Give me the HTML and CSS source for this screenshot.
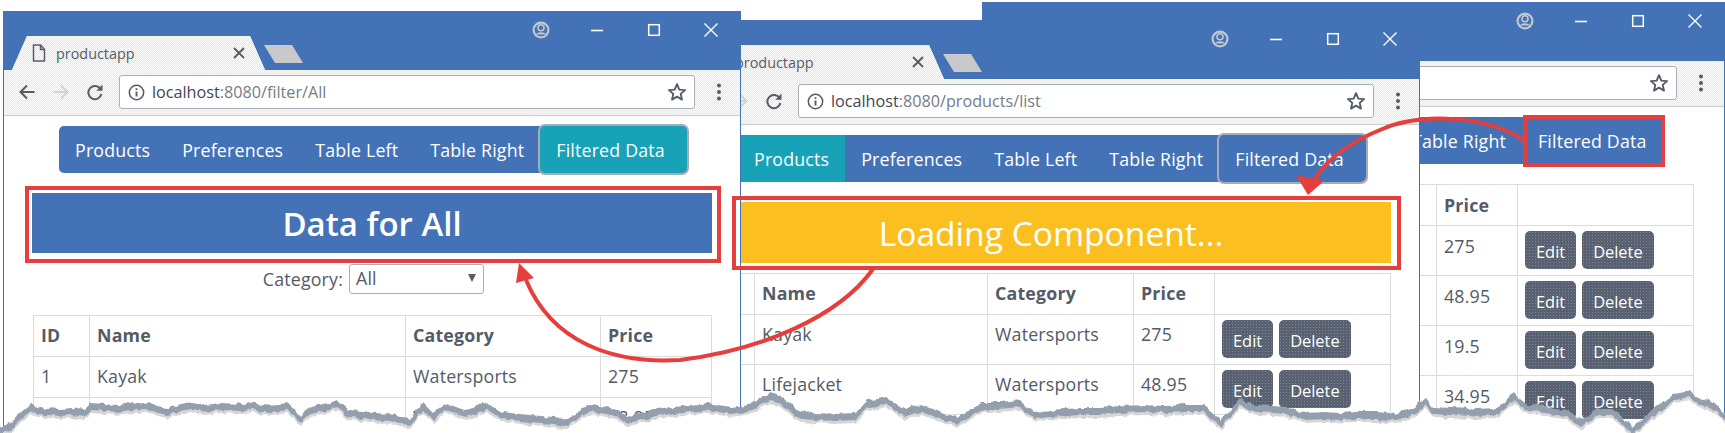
FILE: index.html
```html
<!DOCTYPE html>
<html lang="en">
<head>
<meta charset="utf-8">
<title>productapp</title>
<link rel="stylesheet" href="styles.css">
</head>
<body>
<svg class="defs" width="0" height="0" aria-hidden="true">
  <symbol id="i-doc" viewBox="0 0 14 18"><path d="M1.5 1h7l4 4.5V17h-11zM8.5 1v4.5h4" fill="none" stroke="#555c68" stroke-width="1.5" stroke-linejoin="round"/></symbol>
  <symbol id="i-x" viewBox="0 0 14 14"><path d="M2 2l10 10M12 2L2 12" fill="none" stroke="currentColor" stroke-width="1.8"/></symbol>
  <symbol id="i-xthin" viewBox="0 0 16 16"><path d="M1.5 1.5l13 13M14.5 1.5l-13 13" fill="none" stroke="currentColor" stroke-width="1.4"/></symbol>
  <symbol id="i-min" viewBox="0 0 16 16"><path d="M2 8.5h12" fill="none" stroke="currentColor" stroke-width="1.6"/></symbol>
  <symbol id="i-max" viewBox="0 0 16 16"><rect x="2.7" y="2.7" width="10.6" height="10.6" fill="none" stroke="currentColor" stroke-width="1.5"/></symbol>
  <symbol id="i-user" viewBox="0 0 18 18"><circle cx="9" cy="9" r="7.4" fill="#4472b6" stroke="#c3c7ce" stroke-width="2.2"/><circle cx="9" cy="6.8" r="3" fill="none" stroke="#c3c7ce" stroke-width="1.6"/><path d="M4 13.6c1-3 9-3 10 0" fill="#c3c7ce"/></symbol>
  <symbol id="i-back" viewBox="0 0 18 18"><path d="M16.5 9H3M9 2.5L2.5 9 9 15.5" fill="none" stroke="currentColor" stroke-width="2"/></symbol>
  <symbol id="i-fwd" viewBox="0 0 18 18"><path d="M1.5 9H15M9 2.5L15.5 9 9 15.5" fill="none" stroke="currentColor" stroke-width="2"/></symbol>
  <symbol id="i-reload" viewBox="0 0 18 18"><path d="M14.6 6.2A6.6 6.6 0 1 0 15.4 11" fill="none" stroke="currentColor" stroke-width="2"/><path d="M16.5 1.6v6.2h-6.2z" fill="currentColor"/></symbol>
  <symbol id="i-info" viewBox="0 0 18 18"><circle cx="9" cy="9" r="7.6" fill="none" stroke="currentColor" stroke-width="1.6"/><path d="M9 8v5.2M9 4.6v1.8" fill="none" stroke="currentColor" stroke-width="2"/></symbol>
  <symbol id="i-star" viewBox="0 0 20 20"><path d="M10 2.2l2.3 5.4 5.8.5-4.4 3.8 1.3 5.7-5-3-5 3 1.3-5.7-4.4-3.8 5.8-.5z" fill="none" stroke="currentColor" stroke-width="1.9" stroke-linejoin="round"/></symbol>
  <symbol id="i-menu" viewBox="0 0 6 20"><circle cx="3" cy="3.5" r="2" fill="currentColor"/><circle cx="3" cy="10" r="2" fill="currentColor"/><circle cx="3" cy="16.5" r="2" fill="currentColor"/></symbol>
  <filter id="rough" x="-1%" y="-5%" width="102%" height="110%"><feTurbulence type="fractalNoise" baseFrequency="0.14 0.06" numOctaves="2" seed="4"/><feDisplacementMap in="SourceGraphic" scale="6" xChannelSelector="R" yChannelSelector="G"/></filter>
</svg>

<div class="desk">

  <section class="win win-3">
    <header class="titlebar">
      <div class="controls"><svg class="ctl ctl-user"><use href="#i-user"/></svg><svg class="ctl"><use href="#i-min"/></svg><svg class="ctl"><use href="#i-max"/></svg><svg class="ctl"><use href="#i-xthin"/></svg></div>
    </header>
    <div class="toolbar toolbar-end">
      <div class="addr"><svg class="addr-star"><use href="#i-star"/></svg></div>
      <svg class="tb-menu"><use href="#i-menu"/></svg>
    </div>
    <div class="content">
      <nav class="nav"><span class="nav-gap"></span><a>Table Right</a><a>Filtered Data</a></nav>
      <table class="grid grid-act grid-top">
        <colgroup><col class="c-id2"><col class="c-name2"><col class="c-cat2"><col class="c-price2"><col class="c-act"></colgroup>
        <tr><th></th><th></th><th></th><th>Price</th><th></th></tr>
        <tr><td></td><td></td><td></td><td>275</td><td><button class="btn">Edit</button><button class="btn">Delete</button></td></tr>
        <tr><td></td><td></td><td></td><td>48.95</td><td><button class="btn">Edit</button><button class="btn">Delete</button></td></tr>
        <tr><td></td><td></td><td></td><td>19.5</td><td><button class="btn">Edit</button><button class="btn">Delete</button></td></tr>
        <tr><td></td><td></td><td></td><td>34.95</td><td><button class="btn">Edit</button><button class="btn">Delete</button></td></tr>
      </table>
    </div>
  </section>

  <section class="win win-2">
    <header class="titlebar">
      <div class="tab"><svg class="tab-doc"><use href="#i-doc"/></svg><span class="tab-name">productapp</span><svg class="tab-x"><use href="#i-x"/></svg></div>
      <div class="ghost"></div>
      <div class="controls"><svg class="ctl ctl-user"><use href="#i-user"/></svg><svg class="ctl"><use href="#i-min"/></svg><svg class="ctl"><use href="#i-max"/></svg><svg class="ctl"><use href="#i-xthin"/></svg></div>
    </header>
    <div class="toolbar">
      <svg class="tb tb-back"><use href="#i-back"/></svg><svg class="tb tb-fwd"><use href="#i-fwd"/></svg><svg class="tb"><use href="#i-reload"/></svg>
      <div class="addr"><svg class="addr-info"><use href="#i-info"/></svg><span class="url"><b>localhost</b>:8080/products/list</span><svg class="addr-star"><use href="#i-star"/></svg></div>
      <svg class="tb-menu"><use href="#i-menu"/></svg>
    </div>
    <div class="content">
      <nav class="nav"><a class="on">Products</a><a>Preferences</a><a>Table Left</a><a>Table Right</a><a class="focus">Filtered Data</a></nav>
      <h3 class="banner banner-wait">Loading Component...</h3>
      <table class="grid grid-act grid-mid">
        <colgroup><col class="c-id2"><col class="c-name2"><col class="c-cat2"><col class="c-price2"><col class="c-act"></colgroup>
        <tr><th></th><th>Name</th><th>Category</th><th>Price</th><th></th></tr>
        <tr><td></td><td>Kayak</td><td>Watersports</td><td>275</td><td><button class="btn">Edit</button><button class="btn">Delete</button></td></tr>
        <tr><td></td><td>Lifejacket</td><td>Watersports</td><td>48.95</td><td><button class="btn">Edit</button><button class="btn">Delete</button></td></tr>
      </table>
    </div>
  </section>

  <section class="win win-1">
    <header class="titlebar">
      <div class="tab"><svg class="tab-doc"><use href="#i-doc"/></svg><span class="tab-name">productapp</span><svg class="tab-x"><use href="#i-x"/></svg></div>
      <div class="ghost"></div>
      <div class="controls"><svg class="ctl ctl-user"><use href="#i-user"/></svg><svg class="ctl"><use href="#i-min"/></svg><svg class="ctl"><use href="#i-max"/></svg><svg class="ctl"><use href="#i-xthin"/></svg></div>
    </header>
    <div class="toolbar">
      <svg class="tb tb-back"><use href="#i-back"/></svg><svg class="tb tb-fwd"><use href="#i-fwd"/></svg><svg class="tb"><use href="#i-reload"/></svg>
      <div class="addr"><svg class="addr-info"><use href="#i-info"/></svg><span class="url"><b>localhost</b>:8080/filter/All</span><svg class="addr-star"><use href="#i-star"/></svg></div>
      <svg class="tb-menu"><use href="#i-menu"/></svg>
    </div>
    <div class="content">
      <nav class="nav"><a>Products</a><a>Preferences</a><a>Table Left</a><a>Table Right</a><a class="on focus">Filtered Data</a></nav>
      <h3 class="banner banner-data">Data for All</h3>
      <div class="filter"><span>Category:</span><div class="select"><span>All</span><i class="caret"></i></div></div>
      <table class="grid grid-plain">
        <colgroup><col class="c-id1"><col class="c-name1"><col class="c-cat1"><col class="c-price1"></colgroup>
        <tr><th>ID</th><th>Name</th><th>Category</th><th>Price</th></tr>
        <tr><td>1</td><td>Kayak</td><td>Watersports</td><td>275</td></tr>
        <tr><td>2</td><td>Lifejacket</td><td>Watersports</td><td>48.95</td></tr>
      </table>
    </div>
  </section>

  <svg class="notes" viewBox="0 0 1725 433" aria-hidden="true">
    <g fill="none" stroke="#e63e3c" stroke-width="4">
      <rect x="27" y="188" width="692" height="73"/>
      <rect x="734" y="198" width="665" height="70"/>
      <rect x="1525" y="117" width="138" height="48"/>
      <path d="M873 269C838 318 760 350 680 360 612 364 552 342 526 280"/>
      <path d="M1526 142C1490 115 1420 112 1380 130 1350 142 1326 160 1314 180"/>
    </g>
    <path fill="#e63e3c" d="M519 263l15 15-18 5zM1308 195l-12-20 28 6z"/>
  </svg>

  <svg class="tear" viewBox="0 0 1725 433" aria-hidden="true">
    <defs>
      <polygon id="edge" points="-6,440 0,427 8,424 14,420 20,413 31,404 38,407 48,408 60,409 72,408 84,410 91,403 105,404 118,405 130,403 140,404 148,402 158,406 167,408 180,405 191,403 205,405 220,403 240,404 255,403 270,405 287,403 295,410 301,417 306,410 311,407 322,404 330,403 337,400 343,405 349,410 362,411 375,413 390,414 400,417 411,418 418,410 423,403 428,408 433,413 440,407 447,403 456,407 466,410 476,407 486,402 494,407 502,412 520,414 540,416 555,417 567,420 578,412 589,405 600,406 612,408 620,412 627,417 640,413 650,411 660,408 675,407 690,405 708,403 725,406 730,407 745,405 755,402 763,396 770,393 780,396 788,402 795,409 801,412 815,413 835,414 855,413 862,406 868,400 878,399 886,397 895,403 904,410 912,407 922,405 932,409 945,414 958,417 970,410 982,402 1000,402 1020,400 1027,406 1034,412 1050,410 1065,409 1080,408 1100,408 1120,406 1145,405 1165,406 1185,405 1203,405 1212,412 1221,420 1230,410 1241,398 1249,402 1257,405 1272,406 1288,407 1297,411 1306,413 1325,412 1340,413 1355,412 1375,412 1390,413 1404,412 1414,407 1425,398 1430,402 1434,407 1450,408 1475,409 1498,408 1507,400 1515,393 1520,399 1525,403 1545,406 1568,410 1575,415 1582,420 1590,414 1599,408 1612,408 1622,417 1632,427 1640,420 1649,413 1662,403 1676,393 1684,391 1690,390 1695,396 1698,398 1710,400 1717,406 1723,412 1740,418 1740,440"/>
    </defs>
    <g filter="url(#rough)">
      <use href="#edge" fill="#949fae"/>
      <use href="#edge" y="7" fill="#d6d6d8"/>
      <use href="#edge" y="10" fill="#ffffff"/>
    </g>
  </svg>
</div>
</body>
</html>
```

FILE: styles.css
```css
* { box-sizing: border-box; }

html, body { margin: 0; background: #fff; }

.defs { position: absolute; }

.desk {
  position: relative;
  width: 1725px;
  height: 433px;
  overflow: hidden;
  background: #fff;
  font-family: "Open Sans", "Noto Sans", sans-serif;
  font-size: 17.8px;
  letter-spacing: 0.18px;
  color: #545b67;
}

/* windows on a free canvas */
.win {
  position: absolute;
  width: 738px;
  height: 422px;
  background: #fff;
  border: 1px solid #4472b6;
  border-bottom: 0;
  overflow: hidden;
}
.win-1 { left: 3px; top: 11px; z-index: 3; }
.win-2 { left: 682px; top: 20px; z-index: 2; }
.win-3 { left: 982px; top: 2px; width: 743px; z-index: 1; }

/* title bar */
.titlebar {
  display: flex;
  align-items: flex-end;
  height: 58px;
  padding: 0 21px 0 8px;
  background: #4472b6;
}
.tab {
  display: flex;
  align-items: center;
  width: 253px;
  height: 34px;
  padding: 0 19px 0 20px;
  clip-path: polygon(0 100%, 15px 0, 238px 0, 100% 100%);
  background-color: #fff;
  background-image: conic-gradient(#e4e4e4 25%, #fff 0 50%, #e4e4e4 0 75%, #fff 0);
  background-size: 2px 2px;
}
.tab-doc { width: 14px; height: 18px; margin-right: 10px; }
.tab-name { flex: 1; font-size: 14.4px; letter-spacing: 0; color: #555c68; }
.tab-x { width: 14px; height: 14px; color: #555c68; }
.ghost {
  width: 39px;
  height: 18px;
  margin: 0 0 7px -1px;
  clip-path: polygon(0 0, 28px 0, 100% 100%, 11px 100%);
  background: #c9c9cb;
}
.controls {
  display: flex;
  align-items: center;
  gap: 41px;
  margin-left: auto;
  align-self: flex-start;
  height: 16px;
  margin-top: 10px;
  color: #fff;
}
.ctl { width: 16px; height: 16px; }
.ctl-user { width: 18px; height: 18px; margin-right: -2px; }

/* toolbar */
.toolbar {
  display: flex;
  align-items: center;
  height: 46px;
  padding: 0 18px 1px 14px;
  border-bottom: 1px solid #c9ccd2;
  background-color: #fff;
  background-image: conic-gradient(#e6e6e6 25%, #fff 0 50%, #e6e6e6 0 75%, #fff 0);
  background-size: 2px 2px;
}
.toolbar-end { justify-content: flex-end; padding-right: 20px; }
.tb { width: 18px; height: 18px; margin-right: 16px; color: #555c68; }
.tb-fwd { color: #d3d3d5; }
.addr {
  display: flex;
  align-items: center;
  justify-content: flex-end;
  width: 577px;
  height: 34px;
  margin-left: -1px;
  padding: 0 7px 0 8px;
  background: #fff;
  border: 1px solid #aab0bb;
  border-radius: 3px;
}
.addr-info { width: 17px; height: 17px; margin-right: 7px; color: #555c68; }
.url { flex: 1; font-size: 16.2px; letter-spacing: 0; color: #767c87; white-space: nowrap; }
.url b { font-weight: 400; color: #3f4652; }
.addr-star { width: 20px; height: 20px; color: #555c68; }
.tb-menu { width: 6px; height: 20px; margin-left: 21px; color: #555c68; }

/* page */
.content { padding-top: 10px; }
.win-3 .content { padding-left: 3px; }

.nav {
  display: flex;
  width: 628px;
  height: 47px;
  margin: 0 0 0 55px;
  border-radius: 5px;
  background: #4472b6;
}
.win-3 .nav { width: 622px; }
.nav-gap { width: 355px; flex: none; }
.nav a {
  display: flex;
  align-items: center;
  padding: 0 16px;
  color: #fff;
  white-space: nowrap;
}
.nav a.on { background: #17a2b8; }
.nav a.focus {
  border-radius: 5px;
  box-shadow: 0 0 0 2px #a6acb6;
}
.nav a:last-child { flex: 1; }

.banner {
  width: 680px;
  height: 60px;
  margin: 20px 0 0 28px;
  display: flex;
  align-items: center;
  justify-content: center;
  color: #fff;
  font-size: 33px;
  letter-spacing: 0;
}
.banner-data { background: #4472b6; font-weight: 600; }
.banner-wait { height: 61px; background: #fbbf20; font-weight: 400; font-size: 33.6px; }

.filter {
  display: flex;
  align-items: center;
  justify-content: flex-end;
  gap: 6px;
  width: 480px;
  height: 30px;
  margin: 11px 0 21px;
}
.select {
  display: flex;
  align-items: center;
  justify-content: space-between;
  flex: none;
  width: 135px;
  height: 30px;
  padding: 0 7px 3px 6px;
  border: 1px solid #a9aeb8;
  border-radius: 3px;
  background: #fff;
}
.caret {
  width: 0;
  height: 0;
  border-left: 4px solid transparent;
  border-right: 4px solid transparent;
  border-top: 8px solid #555c68;
}

/* tables */
.grid {
  table-layout: fixed;
  border-collapse: collapse;
  width: 678px;
  margin-left: 29px;
}
.grid-mid { margin-top: 10px; }
.grid-top { margin-top: 20px; }
.grid th, .grid td {
  padding: 7px 7px 0;
  border: 1px solid #dcdcde;
  line-height: 24px;
  text-align: left;
  vertical-align: top;
  white-space: nowrap;
}
.grid-top th, .grid-top td { padding-top: 8px; }
.grid th { height: 41px; font-weight: 700; }
.grid-plain td { height: 41px; }
.grid-act td { height: 50px; }
.grid-act td:last-child { padding-top: 5px; }

.c-id1 { width: 56px; }
.c-name1 { width: 316px; }
.c-cat1 { width: 195px; }
.c-price1 { width: 111px; }
.c-id2 { width: 42px; }
.c-name2 { width: 233px; }
.c-cat2 { width: 146px; }
.c-price2 { width: 81px; }
.c-act { width: 176px; }

.btn {
  height: 38px;
  margin: 0 6px 0 0;
  padding: 3px 11px 0;
  border: 0;
  border-radius: 5px;
  background-color: #596170;
  background-image: radial-gradient(#76869c 0.6px, transparent 0.9px);
  background-size: 3px 3px;
  color: #fff;
  font-family: inherit;
  font-size: 16.4px;
  vertical-align: top;
}

/* overlays */
.notes, .tear {
  position: absolute;
  left: 0;
  top: 0;
  width: 1725px;
  height: 433px;
}
.notes { z-index: 4; }
.tear { z-index: 5; }
```
